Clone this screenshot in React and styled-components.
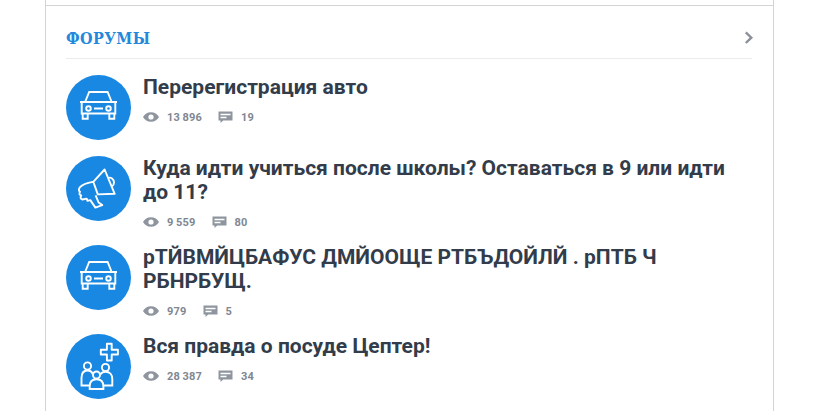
import styled, { createGlobalStyle } from 'styled-components';

const GlobalStyle = createGlobalStyle`
  * {
    box-sizing: border-box;
  }

  body {
    margin: 0;
    background: #fff;
    font-family: Roboto, 'Liberation Sans', sans-serif;
    overflow: hidden;
  }
`;

const Page = styled.div`
  width: 729px;
  height: 411px;
  margin-left: 45px;
  border: 1px solid #d4d4d6;
  border-top: 0;
  border-bottom: 0;
  overflow: hidden;
`;

const Section = styled.section`
  margin-top: 5px;
  padding: 0 20px;
  border-top: 1px solid #d4d4d6;
`;

const Header = styled.header`
  display: flex;
  align-items: center;
  justify-content: space-between;
  width: 686px;
  height: 53px;
  padding-top: 11px;
  border-bottom: 1px solid #ebebed;

  svg {
    margin: 0 -2px 0 0;
  }
`;

const Heading = styled.h2`
  margin: 0;
  padding-top: 2px;
  color: #2489da;
  font-family: 'DejaVu Serif Condensed', 'DejaVu Serif', serif;
  font-size: 16px;
  font-stretch: condensed;
  font-weight: 700;
  letter-spacing: 0.4px;
  line-height: 20px;
  white-space: nowrap;
`;

const List = styled.ul`
  display: flex;
  flex-direction: column;
  gap: 16px;
  margin: 0;
  padding: 16px 0 0;
  list-style: none;
`;

const Item = styled.li`
  display: flex;
  gap: 12px;
`;

const Avatar = styled.div`
  flex: none;
  width: 65px;
  height: 65px;
  border-radius: 50%;
  background: #1988e2;

  svg {
    display: block;
    fill: none;
    stroke: #fff;
    stroke-width: 1.9;
  }
`;

const Title = styled.h3`
  width: 596px;
  margin: 0;
  color: #323c4a;
  font-size: 21px;
  font-weight: 700;
  line-height: 24px;
`;

const Meta = styled.div`
  display: flex;
  align-items: center;
  gap: 16px;
  height: 14px;
  margin-top: 11px;
`;

const Counter = styled.span`
  display: flex;
  align-items: center;
  gap: 8px;
  color: #808792;
  font-size: 11px;
  font-weight: 700;
  letter-spacing: 0.2px;
  word-spacing: -0.4px;
  line-height: 14px;
`;

const Count = styled.span`
  padding-top: 1px;
`;

const CarIcon = () => (
  <svg width="65" height="65" viewBox="0 0 65 65">
    <path d="M19.3 26.5 23.2 17h18.4L45.5 26.5M14 27h37M15.7 27v11.5h33.6V27M16.7 39v4.7h5V39M43.3 39v4.7h5V39M28 33.5h9" />
    <circle cx="22.5" cy="33.5" r="2.3" />
    <circle cx="42.5" cy="33.5" r="2.3" />
  </svg>
);

const MegaphoneIcon = () => (
  <svg width="65" height="65" viewBox="0 0 65 65">
    <path
      strokeLinejoin="round"
      d="M27.3 25.8 38.6 13.5 48.7 37.8 31.8 38.4ZM27.3 25.8C22.5 26.7 17.5 27.5 14 31.2c-2 2.3-.9 4.1 0 4.4-1.2 2.6-.2 3.6 1.2 3.8-1.4 2.2-.4 3.8 1.3 4.1l4.2-.9.8 2.3 2.8-.8 5.1 7.5 6.9-2.5-3.7-2.6-3-7.1M42.3 22c2.3-1.3 5.7 1.1 5.7 4.4 0 2.2-.9 3.4-2.4 4.3"
    />
  </svg>
);

const FamilyIcon = () => (
  <svg width="65" height="65" viewBox="0 0 65 65">
    <path d="M40.9 9.8h4.8v6h6.2v4.7h-6.2v6h-4.8v-6h-6.1v-4.7h6.1Z" strokeLinejoin="round" />
    <circle cx="21.5" cy="32" r="3.6" />
    <circle cx="39.5" cy="33.5" r="3.6" />
    <circle cx="30.5" cy="41" r="3.5" />
    <path d="M24 51.5h-8.5V44c0-4.5 2.2-7.5 6-7.5 2.5 0 4.4 1.3 5.3 3.6M37 51.5h9.3V45c0-4-2.3-7.2-6.8-7.2-2.4 0-4.1 1-5.2 2.8M23.7 55v-2.5c0-4.5 2.6-7.2 6.8-7.2s6.9 2.7 6.9 7.2V55Z" />
  </svg>
);

const EyeIcon = () => (
  <svg width="16" height="10" viewBox="0 0 16 10">
    <path
      fill="#8f959f"
      fillRule="evenodd"
      d="M0 5C1.7 2 4.4.3 8 .3S14.3 2 16 5c-1.7 3-4.4 4.7-8 4.7S1.7 8 0 5Zm8-2.6a2.6 2.6 0 1 0 0 5.2 2.6 2.6 0 0 0 0-5.2Z"
    />
  </svg>
);

const CommentIcon = () => (
  <svg width="15" height="12" viewBox="0 0 15 12">
    <path fill="#8f959f" d="M.5.5h14v9H5.2L2.5 12V9.5h-2Z" />
    <path stroke="#fff" strokeWidth="1.3" d="M2.5 3.5h10M2.5 6.5h6" />
  </svg>
);

const ChevronIcon = () => (
  <svg width="10" height="14" viewBox="0 0 10 14">
    <path d="m1.8 1.4 5.5 5.3-5.5 5.3" fill="none" stroke="#8b909b" strokeWidth="2.4" />
  </svg>
);

const topics = [
  { icon: CarIcon, title: 'Перерегистрация авто', views: '13 896', comments: '19' },
  {
    icon: MegaphoneIcon,
    title: 'Куда идти учиться после школы? Оставаться в 9 или идти до 11?',
    views: '9 559',
    comments: '80',
  },
  {
    icon: CarIcon,
    title: 'рТЙВМЙЦБАФУС ДМЙООЩЕ РТБЪДОЙЛЙ . рПТБ Ч РБНРБУЩ.',
    views: '979',
    comments: '5',
  },
  { icon: FamilyIcon, title: 'Вся правда о посуде Цептер!', views: '28 387', comments: '34' },
];

const App = () => {
  return (
    <>
      <GlobalStyle />
      <Page>
        <Section>
          <Header>
            <Heading>ФОРУМЫ</Heading>
            <ChevronIcon />
          </Header>
          <List>
            {topics.map(({ icon: Icon, title, views, comments }) => (
              <Item key={title}>
                <Avatar>
                  <Icon />
                </Avatar>
                <div>
                  <Title>{title}</Title>
                  <Meta>
                    <Counter>
                      <EyeIcon />
                      <Count>{views}</Count>
                    </Counter>
                    <Counter>
                      <CommentIcon />
                      <Count>{comments}</Count>
                    </Counter>
                  </Meta>
                </div>
              </Item>
            ))}
          </List>
        </Section>
      </Page>
    </>
  );
};

export default App;
